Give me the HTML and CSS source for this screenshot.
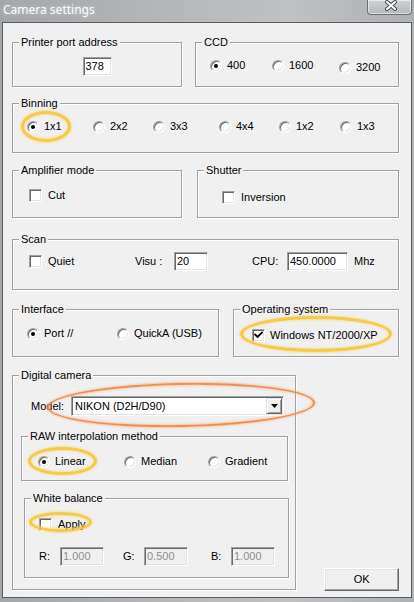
FILE: index.html
```html
<!DOCTYPE html>
<html>
<head>
<meta charset="utf-8">
<title>Camera settings</title>
<link rel="stylesheet" href="styles.css">
</head>
<body>
<div class="window">
  <div class="titlebar">
    <span class="title">Camera settings</span>
    <div class="close">
      <svg width="14" height="11" viewBox="0 0 14 11">
        <path d="M3 2 L11 9 M11 2 L3 9" stroke="#4a4d52" stroke-width="4" stroke-linecap="round" fill="none"/>
        <path d="M3 2 L11 9 M11 2 L3 9" stroke="#ffffff" stroke-width="2" stroke-linecap="round" fill="none"/>
      </svg>
    </div>
  </div>
  <div class="client">
    <div class="row">
      <div class="group g-printer">
        <span class="legend">Printer port address</span>
        <span class="field f-port">378</span>
      </div>
      <div class="group g-ccd">
        <span class="legend">CCD</span>
        <div class="opt"><span class="radio on"></span><span>400</span></div>
        <div class="opt"><span class="radio"></span><span>1600</span></div>
        <div class="opt low"><span class="radio"></span><span>3200</span></div>
      </div>
    </div>

    <div class="row">
      <div class="group g-binning">
        <span class="legend">Binning</span>
        <div class="opt"><span class="radio on"></span><span>1x1</span></div>
        <div class="opt"><span class="radio"></span><span>2x2</span></div>
        <div class="opt"><span class="radio"></span><span>3x3</span></div>
        <div class="opt"><span class="radio"></span><span>4x4</span></div>
        <div class="opt"><span class="radio"></span><span>1x2</span></div>
        <div class="opt"><span class="radio"></span><span>1x3</span></div>
      </div>
    </div>

    <div class="row">
      <div class="group g-amp">
        <span class="legend">Amplifier mode</span>
        <div class="opt cb"><span class="check"></span><span>Cut</span></div>
      </div>
      <div class="group g-shutter">
        <span class="legend">Shutter</span>
        <div class="opt cb"><span class="check"></span><span>Inversion</span></div>
      </div>
    </div>

    <div class="row">
      <div class="group g-scan">
        <span class="legend">Scan</span>
        <div class="scan-row">
          <div class="opt cb quiet"><span class="check"></span><span>Quiet</span></div>
          <span class="lbl lbl-visu">Visu :</span>
          <span class="field f-visu">20</span>
          <span class="lbl lbl-cpu">CPU:</span>
          <span class="field f-cpu">450.0000</span>
          <span class="lbl lbl-mhz">Mhz</span>
        </div>
      </div>
    </div>

    <div class="row">
      <div class="group g-iface">
        <span class="legend">Interface</span>
        <div class="opt"><span class="radio on"></span><span>Port //</span></div>
        <div class="opt"><span class="radio"></span><span>QuickA (USB)</span></div>
      </div>
      <div class="group g-os">
        <span class="legend">Operating system</span>
        <div class="opt cb"><span class="check on"><svg width="9" height="9" viewBox="0 0 9 9"><path d="M1 3.5 L3.5 6 L8 1.5" stroke="#000" stroke-width="1.8" fill="none" stroke-linecap="square"/></svg></span><span>Windows NT/2000/XP</span></div>
      </div>
    </div>

    <div class="row bottom">
      <div class="group g-camera">
        <span class="legend">Digital camera</span>
        <div class="model-row">
          <span class="lbl lbl-model">Model:</span>
          <div class="select">
            <span class="select-text">NIKON (D2H/D90)</span>
            <span class="drop"><svg width="7" height="4" viewBox="0 0 7 4"><path d="M0 0 H7 L3.5 4 Z" fill="#000"/></svg></span>
          </div>
        </div>
        <div class="group g-raw">
          <span class="legend">RAW interpolation method</span>
          <div class="opt"><span class="radio on"></span><span>Linear</span></div>
          <div class="opt"><span class="radio"></span><span>Median</span></div>
          <div class="opt"><span class="radio"></span><span>Gradient</span></div>
        </div>
        <div class="group g-wb">
          <span class="legend">White balance</span>
          <div class="opt cb"><span class="check"></span><span>Apply</span></div>
          <div class="rgb-row">
            <span class="lbl lbl-r">R:</span>
            <span class="field dis">1.000</span>
            <span class="lbl lbl-g">G:</span>
            <span class="field dis">0.500</span>
            <span class="lbl lbl-b">B:</span>
            <span class="field dis">1.000</span>
          </div>
        </div>
      </div>
      <div class="btn">OK</div>
    </div>
  </div>

  <div class="hl hl-y hl-1x1"></div>
  <div class="hl hl-y hl-os"></div>
  <div class="hl hl-y hl-linear"></div>
  <div class="hl hl-y hl-apply"></div>
  <div class="hl hl-o hl-model"></div>
</div>
</body>
</html>
```

FILE: styles.css
```css
* { box-sizing: border-box; }
html, body { margin: 0; padding: 0; }
body {
  width: 414px;
  height: 602px;
  overflow: hidden;
  font-family: "Liberation Sans", Arial, sans-serif;
  font-size: 11px;
  line-height: 13px;
  color: #000;
  background: #a9acaf;
}
.window {
  position: relative;
  width: 414px;
  height: 602px;
  display: flex;
  flex-direction: column;
  background: linear-gradient(to right, #a4a7aa 0%, #b6b8ba 45%, #bfc1c3 70%, #aeb1b4 100%);
}
.titlebar {
  height: 22px;
  flex: none;
  display: flex;
  justify-content: space-between;
  align-items: flex-start;
  padding: 0 2px 0 3px;
}
.title {
  font-family: "Noto Sans", "Open Sans", sans-serif;
  font-size: 12px;
  line-height: 16px;
  margin-top: 2px;
  color: #fbfbfb;
  text-shadow: 0 0 4px rgba(255,255,255,0.45);
}
.close {
  width: 45px;
  height: 15px;
  border: 1px solid #6c6f73;
  border-top: none;
  border-radius: 0 0 4px 4px;
  background: linear-gradient(#cfd1d3, #b5b8bb);
  box-shadow: inset 0 0 0 1px rgba(255,255,255,0.5);
  display: flex;
  justify-content: center;
  align-items: flex-start;
}
.close svg { display: block; margin-left: 3px; }

.client {
  margin: 0 2px;
  height: 576px;
  flex: none;
  border: 1px solid #5a5c5f;
  background: #f0f0f0;
  padding: 19px 12px 0 9px;
}
.row { display: flex; align-items: flex-start; }

.group {
  position: relative;
  border: 1px solid #a0a0a0;
  box-shadow: inset 1px 1px #fff, 1px 1px #fff;
}
.legend {
  position: absolute;
  top: -7px;
  left: 6px;
  padding: 0 2px;
  background: #f0f0f0;
  white-space: nowrap;
}

/* controls */
.opt {
  display: flex;
  align-items: center;
  gap: 5px;
  white-space: nowrap;
}
.opt.cb { gap: 6px; }
.radio {
  position: relative;
  flex: none;
  width: 12px;
  height: 12px;
  border-radius: 50%;
  border: 1px solid;
  border-color: #a0a0a0 #ffffff #ffffff #a0a0a0;
  background: #fff;
  box-shadow: inset 1px 1px #696969, inset -1px -1px #e3e3e3;
}
.radio.on::after {
  content: "";
  position: absolute;
  left: 3px;
  top: 3px;
  width: 4px;
  height: 4px;
  border-radius: 50%;
  background: #000;
}
.check {
  flex: none;
  width: 13px;
  height: 13px;
  border: 1px solid;
  border-color: #a0a0a0 #ffffff #ffffff #a0a0a0;
  background: #fff;
  box-shadow: inset 1px 1px #696969, inset -1px -1px #e3e3e3;
  display: flex;
  align-items: center;
  justify-content: center;
}
.check svg { display: block; }
.field {
  display: block;
  flex: none;
  height: 19px;
  border: 1px solid;
  border-color: #a0a0a0 #ffffff #ffffff #a0a0a0;
  box-shadow: inset 1px 1px #696969, inset -1px -1px #e3e3e3;
  background: #fff;
  padding: 0 0 0 2px;
  line-height: 17px;
  white-space: nowrap;
  overflow: hidden;
}
.field.dis {
  width: 44px;
  background: #f0f0f0;
  color: #8d8d8d;
}
.lbl { white-space: nowrap; flex: none; }

/* row 1 */
.g-printer {
  width: 170px;
  height: 45px;
  display: flex;
  justify-content: center;
  align-items: flex-start;
  padding-top: 14px;
}
.f-port { width: 29px; }
.g-ccd {
  width: 204px;
  height: 45px;
  margin-left: 13px;
  display: grid;
  grid-template-columns: 62px 67px auto;
  align-items: start;
  padding: 16px 0 0 14px;
}
.opt.low { margin-top: 2px; }

/* row 2 */
.g-binning {
  width: 387px;
  height: 50px;
  margin-top: 16px;
  display: grid;
  grid-template-columns: 66px 60px 66px 60px 61px auto;
  align-items: start;
  padding: 16px 0 0 14px;
}

/* row 3 */
.g-amp {
  width: 170px;
  height: 48px;
  margin-top: 17px;
  padding: 18px 0 0 16px;
}
.g-shutter {
  width: 202px;
  height: 48px;
  margin-top: 17px;
  margin-left: 15px;
  padding: 20px 0 0 24px;
}

/* row 4 */
.g-scan {
  width: 387px;
  height: 51px;
  margin-top: 21px;
  padding: 12px 0 0 16px;
}
.scan-row {
  display: flex;
  align-items: center;
  height: 19px;
}
.quiet { width: 106px; flex: none; }
.lbl-visu { width: 39px; }
.f-visu { width: 34px; }
.lbl-cpu { width: 35px; margin-left: 44px; }
.f-cpu { width: 61px; }
.lbl-mhz { margin-left: 6px; }

/* row 5 */
.g-iface {
  width: 207px;
  height: 48px;
  margin-top: 19px;
  display: grid;
  grid-template-columns: 90px auto;
  align-items: start;
  padding: 17px 0 0 14px;
}
.g-os {
  width: 166px;
  height: 48px;
  margin-top: 19px;
  margin-left: 14px;
  padding: 19px 0 0 18px;
}
.g-os .opt.cb { gap: 5px; }

/* row 6 */
.row.bottom { align-items: flex-end; margin-top: 18px; }
.g-camera {
  width: 286px;
  height: 215px;
  padding: 20px 0 0 0;
}
.model-row {
  display: flex;
  align-items: center;
  padding-left: 18px;
}
.lbl-model { width: 40px; }
.select {
  width: 213px;
  height: 20px;
  display: flex;
  align-items: center;
  border: 1px solid;
  border-color: #a0a0a0 #ffffff #ffffff #a0a0a0;
  box-shadow: inset 1px 1px #696969, inset -1px -1px #e3e3e3;
  background: #fff;
  padding: 1px;
}
.select-text { flex: 1; padding-left: 2px; white-space: nowrap; }
.drop {
  width: 16px;
  height: 16px;
  border: 1px solid;
  border-color: #e3e3e3 #696969 #696969 #e3e3e3;
  box-shadow: inset 1px 1px #fff, inset -1px -1px #a0a0a0;
  background: #f0f0f0;
  display: flex;
  align-items: center;
  justify-content: center;
}
.drop svg { display: block; }

.g-raw {
  width: 267px;
  height: 45px;
  margin: 20px 0 0 8px;
  display: grid;
  grid-template-columns: 86px 84px auto;
  align-items: start;
  padding: 18px 0 0 16px;
}
.g-wb {
  width: 265px;
  height: 80px;
  margin: 17px 0 0 11px;
  padding: 19px 0 0 14px;
}
.rgb-row {
  display: flex;
  align-items: center;
  margin-top: 16px;
}
.lbl-r { width: 21px; }
.lbl-g { width: 21px; margin-left: 19px; }
.lbl-b { width: 20px; margin-left: 23px; }

.btn {
  width: 75px;
  height: 23px;
  margin-left: 28px;
  margin-bottom: -1px;
  border: 1px solid;
  border-color: #ffffff #696969 #696969 #ffffff;
  box-shadow: inset -1px -1px #a0a0a0, inset 1px 1px #e3e3e3;
  background: #f0f0f0;
  display: flex;
  align-items: center;
  justify-content: center;
}

/* highlight overlays */
.hl {
  position: absolute;
  border-radius: 50%;
  pointer-events: none;
}
.hl-y {
  border: 3px solid rgba(243, 198, 52, 0.9);
  box-shadow: 0 0 2px 1px rgba(248, 218, 120, 0.7), inset 0 0 2px 1px rgba(248, 218, 120, 0.7);
}
.hl-1x1 { left: 21px; top: 111px; width: 50px; height: 31px; }
.hl-os { left: 240px; top: 316px; width: 152px; height: 36px; }
.hl-linear { left: 28px; top: 447px; width: 69px; height: 28px; }
.hl-apply { left: 29px; top: 512px; width: 63px; height: 20px; }
.hl-o {
  border: 2px solid rgba(239, 135, 72, 0.95);
  box-shadow: 0 0 2px 1px rgba(245, 170, 120, 0.6), inset 0 0 2px 1px rgba(245, 170, 120, 0.5);
}
.hl-model {
  left: 47px;
  top: 383px;
  width: 268px;
  height: 44px;
  transform: rotate(-1deg);
}
```
